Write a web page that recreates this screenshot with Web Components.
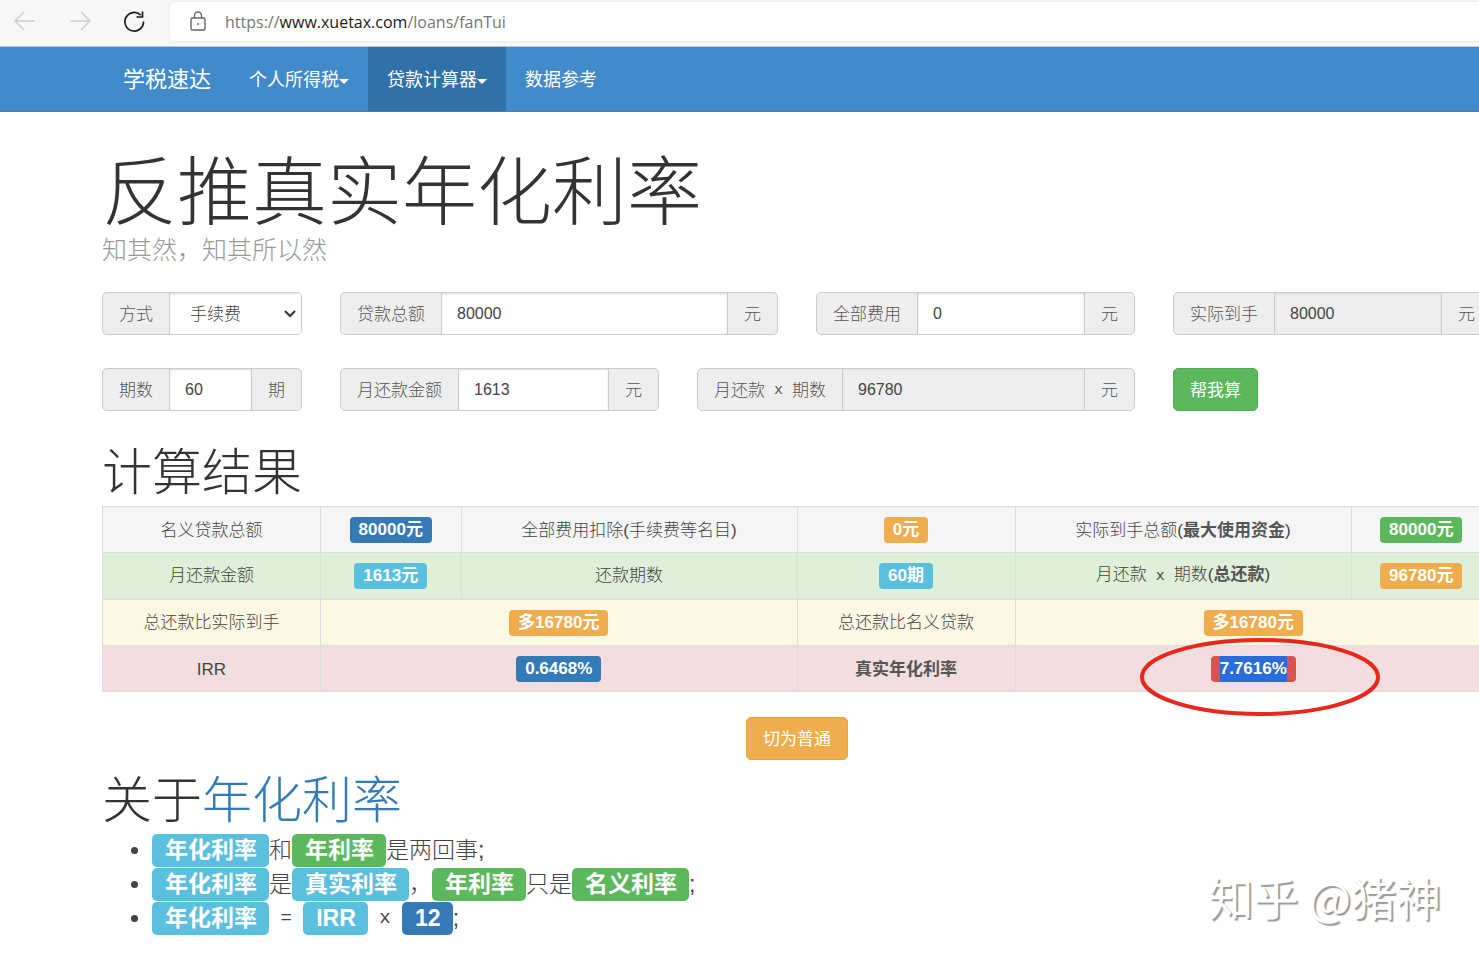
<!DOCTYPE html>
<html lang="zh-CN">
<head>
<meta charset="utf-8">
<meta name="viewport" content="width=device-width, initial-scale=1">
<title>反推真实年化利率</title>
<style>
  body {
    margin: 0;
    min-height: 100vh;
    overflow-x: hidden;
    background: #fff;
    color: #444;
    font: 17px/24px "Liberation Sans", "Noto Sans CJK SC", sans-serif;
    font-weight: 300;
  }
</style>
</head>
<body>
<loan-page></loan-page>

<template id="t-browser-bar">
  <style>
    :host { display: flex; align-items: flex-start; height: 46px; background: #f7f7f7; border-bottom: 1px solid #c4c8cc; box-sizing: content-box; }
    .tools { display: flex; width: 170px; flex: none; padding-top: 9px; box-sizing: border-box; gap: 31px; padding-left: 12px; }
    button { width: 24px; height: 24px; padding: 0; border: 0; background: none; display: block; }
    button svg, .address svg { display: block; }
    .address { flex: 1; display: flex; align-items: center; gap: 17px; height: 39px; margin-top: 2px; padding-left: 18px; background: #fff; border-radius: 5px 0 0 5px; box-shadow: 0 0 3px #ddd; font: 16px/24px "Open Sans", "Noto Sans", sans-serif; color: #767676; }
    .address b { font-weight: 400; color: #1a1a1a; }
  </style>
  <div class="tools">
    <button type="button" aria-label="后退"><svg width="24" height="24" fill="none" stroke="#cdcdcd" stroke-width="1.5"><path d="M23 12H3M12 3L3 12l9 9"/></svg></button>
    <button type="button" aria-label="前进"><svg width="24" height="24" fill="none" stroke="#cdcdcd" stroke-width="1.5"><path d="M3 12h20M14 3l9 9-9 9"/></svg></button>
    <button type="button" aria-label="刷新"><svg width="24" height="24" fill="none" stroke="#1b1b1b" stroke-width="1.7"><path d="M21.500 12.500A9.300 9.300 0 1 1 18.700 6.100M20.500 2.500V8H14.500"/></svg></button>
  </div>
  <div class="address">
    <svg width="20" height="24" fill="none" stroke="#666" stroke-width="1.400"><rect x="3" y="8" width="14" height="12" rx="1.500"/><path d="M6.500 8V5.500a3.500 3.500 0 0 1 7 0V8"/><circle cx="10" cy="14" r="1" fill="#666" stroke="none"/></svg>
    <span>https://<b>www.xuetax.com</b>/loans/fanTui</span>
  </div>
</template>

<template id="t-nav-item">
  <style>
    :host { display: block; }
    a { display: flex; align-items: center; height: 64px; padding: 2px 19px 0; box-sizing: border-box; color: #fff; text-decoration: none; font-size: 18px; font-weight: 400; }
    :host([active]) a { background: #3071a9; }
    :host([menu]) a::after { content: ""; border: 5px solid transparent; border-top-color: #fff; border-bottom: 0; margin-top: 2px; }
  </style>
  <a href="#"><slot></slot></a>
</template>

<template id="t-site-nav">
  <style>
    :host { display: block; background: #428bca; border-bottom: 1px solid #4580b5; }
    nav { display: flex; margin-left: 103px; }
    .brand { display: flex; align-items: center; height: 64px; padding: 2px 19px 0 20px; box-sizing: border-box; color: #fff; text-decoration: none; font-size: 22px; font-weight: 400; }
  </style>
  <nav>
    <a class="brand" href="#">学税速达</a>
    <nav-item menu>个人所得税</nav-item>
    <nav-item menu active>贷款计算器</nav-item>
    <nav-item>数据参考</nav-item>
  </nav>
</template>

<template id="t-field-group">
  <style>
    :host { display: flex; height: 43px; box-sizing: border-box; border: 1px solid #ccc; border-radius: 5px; overflow: hidden; background: #eee; }
    label, .unit { flex: none; display: flex; align-items: center; padding: 2px 16px 0; white-space: pre; color: #555; }
    .unit:empty { display: none; }
    .times { font: 15px/24px "Liberation Mono", monospace; }
    .box { flex: 1; min-width: 0; display: flex; position: relative; border-left: 1px solid #ccc; border-right: 1px solid #ccc; }
    .box.last { border-right: 0; }
    input, select { flex: 1; min-width: 0; width: 100%; margin: 0; padding: 0 15px; border: 0; border-radius: 0; outline: 0; background: #fff; color: #444; font: inherit; font-size: 16px; box-shadow: inset 0 1px 2px #ddd; appearance: none; }
    select { font-size: 17px; padding: 2px 20px 0; }
    input[readonly] { background: #eee; }
    svg { position: absolute; right: 4px; top: 13px; pointer-events: none; }
  </style>
  <label for="control"></label>
  <div class="box"></div>
  <span class="unit"></span>
</template>

<template id="t-action-button">
  <style>
    :host { display: inline-block; }
    button { height: 43px; padding: 2px 16px 0; border: 1px solid #4cae4c; border-radius: 5px; background: #5cb85c; color: #fff; font: inherit; font-weight: 400; }
    :host([tone="warning"]) button { background: #f0ad4e; border-color: #eea236; }
  </style>
  <button type="button"><slot></slot></button>
</template>

<template id="t-tag-label">
  <style>
    :host { display: inline-block; padding: 0 9px; border-radius: 4px; background: #337ab7; color: #fff; font-weight: 700; line-height: 26px; white-space: nowrap; vertical-align: middle; }
    :host([tone="info"]) { background: #5bc0de; }
    :host([tone="success"]) { background: #5cb85c; }
    :host([tone="warning"]) { background: #f0ad4e; }
    :host([tone="danger"]) { background: #d9534f; }
    :host([large]) { padding: 0 12px 0 13px; line-height: 33px; border-radius: 5px; }
  </style>
  <slot></slot>
</template>

<template id="t-result-table">
  <style>
    :host { display: block; }
    table { width: 100%; table-layout: fixed; border-collapse: collapse; }
    td, th { height: 46px; box-sizing: border-box; padding: 0; border: 1px solid #ddd; text-align: center; font-weight: inherit; white-space: nowrap; }
    th { padding-top: 2px; }
    td { padding-top: 1px; }
    .name { width: 218px; }
    .text { width: 336px; }
    .sum { background: #f5f5f5; }
    .month { background: #dff0d8; }
    .month > * { border-bottom-width: 2px; }
    .extra { background: #fcf8e3; }
    .extra > * { height: 47px; }
    .rate { background: #f2dede; }
    b { font-weight: 700; color: #555; }
    .times { font: 15px/24px "Liberation Mono", monospace; white-space: pre; }
    .picked { display: inline-block; background: #2b6cdc; }
    .mark { position: relative; display: inline-block; }
    .mark svg { position: absolute; left: 50%; top: 50%; margin: -32px 0 0 -114px; pointer-events: none; }
  </style>
  <table>
    <colgroup><col class="name"><col><col class="text"><col class="name"><col class="text"><col></colgroup>
    <tbody>
      <tr class="sum">
        <th scope="row">名义贷款总额</th><td><tag-label>80000元</tag-label></td>
        <th scope="row">全部费用扣除(手续费等名目)</th><td><tag-label tone="warning">0元</tag-label></td>
        <th scope="row">实际到手总额(<b>最大使用资金</b>)</th><td><tag-label tone="success">80000元</tag-label></td>
      </tr>
      <tr class="month">
        <th scope="row">月还款金额</th><td><tag-label tone="info">1613元</tag-label></td>
        <th scope="row">还款期数</th><td><tag-label tone="info">60期</tag-label></td>
        <th scope="row">月还款<span class="times"> x </span>期数(<b>总还款</b>)</th><td><tag-label tone="warning">96780元</tag-label></td>
      </tr>
      <tr class="extra">
        <th scope="row">总还款比实际到手</th><td colspan="2"><tag-label tone="warning">多16780元</tag-label></td>
        <th scope="row">总还款比名义贷款</th><td colspan="2"><tag-label tone="warning">多16780元</tag-label></td>
      </tr>
      <tr class="rate">
        <th scope="row">IRR</th><td colspan="2"><tag-label>0.6468%</tag-label></td>
        <th scope="row"><b>真实年化利率</b></th>
        <td colspan="2"><span class="mark"><tag-label tone="danger"><span class="picked">7.7616%</span></tag-label><svg width="242" height="80" fill="none" stroke="#e8281c" stroke-width="4"><ellipse cx="121" cy="40" rx="118" ry="37"/></svg></span></td>
      </tr>
    </tbody>
  </table>
</template>

<template id="t-about-rates">
  <style>
    :host { display: block; }
    ul { margin: 0; padding: 0 0 0 50px; font-size: 23px; }
    li { height: 34px; line-height: 33px; white-space: nowrap; }
    li > * { vertical-align: top; }
    .sign { font: 19px/33px "Liberation Mono", monospace; white-space: pre; }
  </style>
  <ul>
    <li><tag-label large tone="info">年化利率</tag-label>和<tag-label large tone="success">年利率</tag-label>是两回事;</li>
    <li><tag-label large tone="info">年化利率</tag-label>是<tag-label large tone="info">真实利率</tag-label>，<tag-label large tone="success">年利率</tag-label>只是<tag-label large tone="success">名义利率</tag-label>;</li>
    <li><tag-label large tone="info">年化利率</tag-label><span class="sign"> = </span><tag-label large tone="info">IRR</tag-label><span class="sign"> x </span><tag-label large>12</tag-label>;</li>
  </ul>
</template>

<template id="t-loan-page">
  <style>
    :host { display: block; position: relative; min-height: 100vh; overflow: hidden; }
    main { margin: 36px -13px 0 102px; }
    h1, h2, p { margin: 0; font-weight: 300; }
    h1 { font-size: 75px; line-height: 90px; color: #333; }
    p { font-size: 25px; line-height: 24px; color: #999; }
    h2 { font-size: 50px; line-height: 60px; color: #333; }
    h2 a { color: #337ab7; text-decoration: none; }
    form { display: grid; grid-template-columns: repeat(12, 1fr); gap: 33px 38px; margin: 30px 0 32px; }
    .w2 { grid-column: span 2; }
    .w3 { grid-column: span 3; }
    .w4 { grid-column: span 4; }
    result-table, about-rates { margin-top: 3px; }
    .switch { display: flex; justify-content: center; margin: 25px 0 11px; }
    .credit { position: absolute; right: 38px; bottom: 31px; font-size: 45px; line-height: 64px; font-weight: 400; color: #fff; text-shadow: 2px 2px 1px #999; font-family: "Noto Sans CJK SC", sans-serif; }
  </style>
  <browser-bar></browser-bar>
  <site-nav></site-nav>
  <main>
    <h1>反推真实年化利率</h1>
    <p>知其然，知其所以然</p>
    <form>
      <field-group class="w2" label="方式" choice="手续费"></field-group>
      <field-group class="w4" label="贷款总额" value="80000" unit="元"></field-group>
      <field-group class="w3" label="全部费用" value="0" unit="元"></field-group>
      <field-group class="w3" label="实际到手" value="80000" unit="元" readonly></field-group>
      <field-group class="w2" label="期数" value="60" unit="期"></field-group>
      <field-group class="w3" label="月还款金额" value="1613" unit="元"></field-group>
      <field-group class="w4" label="月还款 x 期数" value="96780" unit="元" readonly></field-group>
      <action-button class="w3">帮我算</action-button>
    </form>
    <h2>计算结果</h2>
    <result-table></result-table>
    <div class="switch"><action-button tone="warning">切为普通</action-button></div>
    <h2>关于<a href="#">年化利率</a></h2>
    <about-rates></about-rates>
  </main>
  <div class="credit">知乎 @猪神</div>
</template>

<script>
  class Templated extends HTMLElement {
    constructor() {
      super();
      const template = document.getElementById('t-' + this.localName);
      this.attachShadow({ mode: 'open' }).append(template.content.cloneNode(true));
    }
  }

  class FieldGroup extends Templated {
    connectedCallback() {
      const root = this.shadowRoot;
      const label = root.querySelector('label');
      const box = root.querySelector('.box');
      if (box.children.length) return;
      const [before, after] = this.getAttribute('label').split(' x ');
      label.append(before);
      if (after) {
        const times = document.createElement('span');
        times.className = 'times';
        times.textContent = ' x ';
        label.append(times, after);
      }
      root.querySelector('.unit').textContent = this.getAttribute('unit') || '';
      const choice = this.getAttribute('choice');
      if (choice) {
        const select = document.createElement('select');
        select.id = 'control';
        select.add(new Option(choice));
        box.classList.add('last');
        box.append(select);
        box.insertAdjacentHTML('beforeend', '<svg width="14" height="14" fill="none" stroke="#333" stroke-width="2"><path d="M2 5l5 5 5-5"/></svg>');
      } else {
        const input = document.createElement('input');
        input.id = 'control';
        input.value = this.getAttribute('value');
        input.readOnly = this.hasAttribute('readonly');
        box.append(input);
      }
    }
  }

  customElements.define('browser-bar', class extends Templated {});
  customElements.define('nav-item', class extends Templated {});
  customElements.define('site-nav', class extends Templated {});
  customElements.define('field-group', FieldGroup);
  customElements.define('action-button', class extends Templated {});
  customElements.define('tag-label', class extends Templated {});
  customElements.define('result-table', class extends Templated {});
  customElements.define('about-rates', class extends Templated {});
  customElements.define('loan-page', class extends Templated {});
</script>
</body>
</html>
